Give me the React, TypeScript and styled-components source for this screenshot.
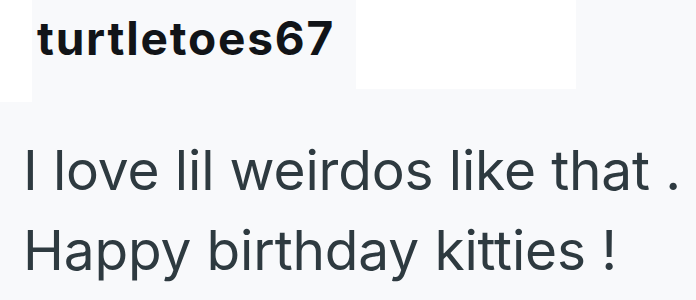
import styled, { createGlobalStyle } from 'styled-components'

const GlobalStyle = createGlobalStyle`
  html, body {
    margin: 0;
    padding: 0;
    background: #f8f9fb;
  }
  body {
    font-family: Inter, "Noto Sans", sans-serif;
    -webkit-font-smoothing: antialiased;
  }
`

const Comment = styled('article')`
  width: 696px;
  height: 300px;
  overflow: hidden;
  background: #f8f9fb;
`

const Header = styled('header')`
  display: flex;
  align-items: flex-start;
  height: 102px;
`

const Blank = styled('div')<{ $width: number, $height: number }>`
  flex: none;
  width: ${({ $width }) => $width}px;
  height: ${({ $height }) => $height}px;
  background: #ffffff;
`

const Username = styled('h5')`
  flex: none;
  width: 319px;
  margin: 0;
  padding: 8px 0 0 5px;
  font-size: 46px;
  line-height: 60px;
  font-weight: 700;
  letter-spacing: 1.8px;
  color: #111418;
`

const Body = styled('p')`
  margin: 28px 0 0 23px;
  font-size: 55px;
  line-height: 80px;
  font-weight: 400;
  letter-spacing: -0.15px;
  color: #2e3a40;
  white-space: nowrap;
`

const App = (): JSX.Element => {
  return (
    <>
      <GlobalStyle />
      <Comment>
        <Header>
          <Blank $width={32} $height={102} />
          <Username>turtletoes67</Username>
          <Blank $width={220} $height={89} />
        </Header>
        <Body>
          I love lil weirdos like that .<br />
          Happy birthday kitties !
        </Body>
      </Comment>
    </>
  )
}

export default App
